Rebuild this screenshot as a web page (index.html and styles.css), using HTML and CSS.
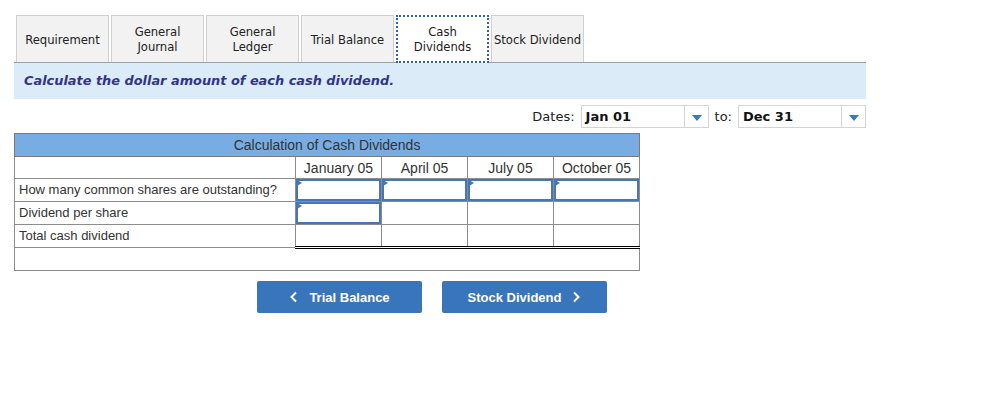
FILE: index.html
```html
<!DOCTYPE html>
<html lang="en">
<head>
  <meta charset="UTF-8" />
  <title>Cash Dividends</title>
  <meta name="viewport" content="width=device-width, initial-scale=1.0" />
  <link rel="stylesheet" href="styles.css">
</head>
<body>
  <div class="page">

    <div class="tabs">
      <div class="tab">Requirement</div>
      <div class="tab">General<br>Journal</div>
      <div class="tab">General<br>Ledger</div>
      <div class="tab">Trial Balance</div>
      <div class="tab active">Cash<br>Dividends</div>
      <div class="tab">Stock Dividend</div>
    </div>

    <div class="instructions">Calculate the dollar amount of each cash dividend.</div>

    <div class="dates">
      <span class="dates-label">Dates:</span>
      <div class="select">
        <span class="select-value">Jan 01</span>
        <span class="select-arrow"></span>
      </div>
      <span class="dates-label">to:</span>
      <div class="select">
        <span class="select-value">Dec 31</span>
        <span class="select-arrow"></span>
      </div>
    </div>

    <table class="calc">
      <colgroup>
        <col class="col-label">
        <col class="col-num">
        <col class="col-num">
        <col class="col-num">
        <col class="col-num">
      </colgroup>
      <tr class="title-row">
        <th colspan="5">Calculation of Cash Dividends</th>
      </tr>
      <tr class="head-row">
        <td></td>
        <td>January 05</td>
        <td>April 05</td>
        <td>July 05</td>
        <td>October 05</td>
      </tr>
      <tr>
        <td class="label">How many common shares are outstanding?</td>
        <td class="entry"><div class="field"></div></td>
        <td class="entry"><div class="field"></div></td>
        <td class="entry"><div class="field"></div></td>
        <td class="entry"><div class="field"></div></td>
      </tr>
      <tr>
        <td class="label">Dividend per share</td>
        <td class="entry"><div class="field"></div></td>
        <td></td>
        <td></td>
        <td></td>
      </tr>
      <tr class="total-row">
        <td class="label">Total cash dividend</td>
        <td></td>
        <td></td>
        <td></td>
        <td></td>
      </tr>
      <tr class="blank-row">
        <td colspan="5"></td>
      </tr>
    </table>

    <div class="nav">
      <button class="nav-btn">
        <svg width="10" height="12" viewBox="0 0 10 12"><path d="M7 1.5 L2.5 6 L7 10.5" fill="none" stroke="#fff" stroke-width="2"/></svg>
        <span>Trial Balance</span>
      </button>
      <button class="nav-btn">
        <span>Stock Dividend</span>
        <svg width="10" height="12" viewBox="0 0 10 12"><path d="M3 1.5 L7.5 6 L3 10.5" fill="none" stroke="#fff" stroke-width="2"/></svg>
      </button>
    </div>

  </div>
</body>
</html>
```

FILE: styles.css
```css
body {
  margin: 0;
  background-color: #fff;
  font-family: "Liberation Sans", Arial, sans-serif;
  color: #333;
}

.page {
  width: 852px;
  padding: 15px 0 0 14px;
}

/* tabs */
.tabs {
  display: flex;
  gap: 2px;
  padding-left: 2px;
  border-bottom: 1px solid #a0a0a0;
}

.tab {
  box-sizing: border-box;
  width: 93px;
  height: 47px;
  display: flex;
  align-items: center;
  justify-content: center;
  text-align: center;
  white-space: nowrap;
  background-color: #f2f2f2;
  border: 1px solid #cfcfcf;
  border-bottom: none;
  font-family: "DejaVu Sans Condensed", "DejaVu Sans", sans-serif;
  font-size: 12.9px;
  line-height: 15px;
  color: #222;
}

.tab.active {
  background-color: #fff;
  border: 2px dotted #2d62b3;
  margin-bottom: -1px;
  height: 48px;
}

.instructions {
  height: 36px;
  line-height: 36px;
  background-color: #dcebf8;
  padding-left: 10px;
  font-family: "DejaVu Sans", Verdana, sans-serif;
  font-weight: bold;
  font-style: italic;
  font-size: 12.9px;
  color: #33338c;
}

/* dates */
.dates {
  display: flex;
  justify-content: flex-end;
  align-items: center;
  gap: 6px;
  margin-top: 6px;
  font-family: "DejaVu Sans", Verdana, sans-serif;
  font-size: 13px;
  color: #222;
}

.select {
  box-sizing: border-box;
  width: 128px;
  height: 23px;
  display: flex;
  border: 1px solid #d4d4d4;
  background-color: #fff;
}

.select-value {
  flex: 1;
  padding-left: 4px;
  line-height: 21px;
  font-weight: bold;
  font-size: 13px;
  color: #111;
}

.select-arrow {
  width: 23px;
  border-left: 1px solid #d4d4d4;
  position: relative;
}

.select-arrow::after {
  content: "";
  position: absolute;
  left: 7px;
  top: 9px;
  border-left: 5px solid transparent;
  border-right: 5px solid transparent;
  border-top: 6px solid #3a78c4;
}

/* table */
.calc {
  margin-top: 5px;
  width: 626px;
  border-collapse: collapse;
  table-layout: fixed;
  font-size: 14px;
}

.col-label { width: 281px; }
.col-num { width: 86px; }

.calc td, .calc th {
  border: 1px solid #8c8c8c;
  height: 22px;
  padding: 0;
  color: #333;
  line-height: 16px;
}

.title-row th {
  background-color: #78ade3;
  font-weight: normal;
  text-align: center;
  border-color: #7a7a7a;
}

.head-row td {
  text-align: center;
  height: 21px;
}

.calc .label {
  padding-left: 4px;
  font-size: 13px;
}

.entry {
  position: relative;
}

.field {
  box-sizing: border-box;
  height: 22px;
  border: 2px solid #4476b8;
}

.entry::before {
  content: "";
  position: absolute;
  left: 1px;
  top: 1px;
  border-top: 3px solid transparent;
  border-bottom: 3px solid transparent;
  border-left: 5px solid #3a78c4;
}

.total-row td {
  height: 21px;
}

.total-row td:not(.label) {
  border-top: 1px solid #000;
  border-bottom: 3px double #000;
}

.blank-row td {
  height: 21px;
}

/* nav buttons */
.nav {
  display: flex;
  gap: 20px;
  margin-top: 10px;
  padding-left: 243px;
}

.nav-btn {
  width: 165px;
  height: 32px;
  display: flex;
  align-items: center;
  justify-content: center;
  gap: 10px;
  background-color: #3875ba;
  border: none;
  border-radius: 2px;
  color: #fff;
  font-family: "Liberation Sans", Arial, sans-serif;
  font-weight: bold;
  font-size: 13px;
  cursor: pointer;
}
```
